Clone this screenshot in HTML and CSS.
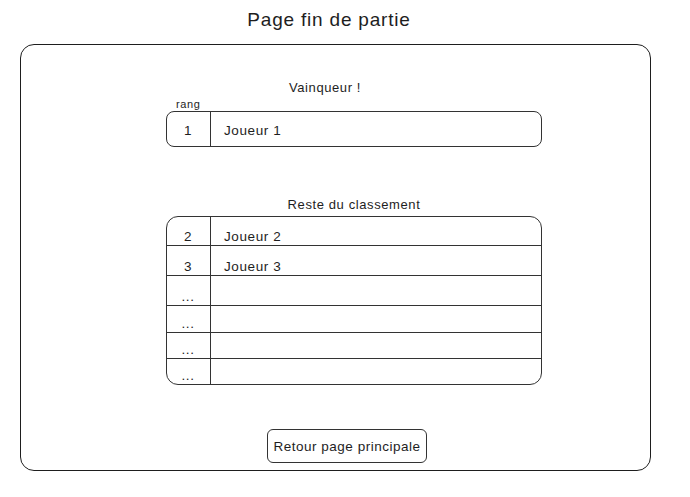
FILE: index.html
```html
<!DOCTYPE html>
<html>
<head>
	<title>Page fin de partie</title>
	<link rel="stylesheet" href="styles.css">
</head>
<body>
	<h1 class="title">Page fin de partie</h1>

	<div class="frame">
		<div class="content">
			<p class="label label-winner">Vainqueur !</p>
			<span class="rank-label">rang</span>
			<div class="board board-winner">
				<div class="row">
					<span class="rank">1</span>
					<span class="name">Joueur 1</span>
				</div>
			</div>

			<p class="label label-rest">Reste du classement</p>
			<div class="board board-rest">
				<div class="row">
					<span class="rank">2</span>
					<span class="name">Joueur 2</span>
				</div>
				<div class="row">
					<span class="rank">3</span>
					<span class="name">Joueur 3</span>
				</div>
				<div class="row">
					<span class="rank">...</span>
					<span class="name"></span>
				</div>
				<div class="row">
					<span class="rank">...</span>
					<span class="name"></span>
				</div>
				<div class="row">
					<span class="rank">...</span>
					<span class="name"></span>
				</div>
				<div class="row">
					<span class="rank">...</span>
					<span class="name"></span>
				</div>
			</div>

			<button class="back">Retour page principale</button>
		</div>
	</div>
</body>
</html>
```

FILE: styles.css
```css
* {
	margin: 0;
	padding: 0;
	box-sizing: border-box;
}

body {
	background-color: #fff;
	color: #1e1e1e;
	font-family: "Liberation Sans", Arial, sans-serif;
	letter-spacing: 0.6px;
}

.title {
	height: 44px;
	line-height: 40px;
	font-size: 19px;
	font-weight: normal;
	text-align: center;
	padding-right: 32px;
	letter-spacing: 0.8px;
}

.frame {
	width: 631px;
	height: 427px;
	margin-left: 20px;
	border: 1.5px solid #1e1e1e;
	border-radius: 14px;
}

.content {
	width: 376px;
	margin-left: 145px;
	padding-top: 34px;
	display: flex;
	flex-direction: column;
}

.label {
	font-size: 13px;
	line-height: 18px;
	text-align: center;
}

.label-winner {
	padding-right: 58px;
}

.label-rest {
	margin-top: 49px;
	margin-bottom: 2px;
}

.rank-label {
	font-size: 11px;
	line-height: 14px;
	padding-left: 10px;
}

.board {
	display: grid;
	border: 1px solid #333;
	font-size: 13.5px;
	line-height: 16px;
}

.board-winner {
	height: 36px;
	border-radius: 8px;
}

.board-rest {
	height: 169px;
	border-radius: 12px;
	grid-template-rows: 29px 30px 30px 27px 26px 1fr;
}

.row {
	display: grid;
	grid-template-columns: 43px 1fr;
}

.rank,
.name {
	display: flex;
	align-items: flex-end;
}

.board-winner .rank,
.board-winner .name {
	align-items: center;
	padding-top: 3px;
}

.board-rest .row {
	border-bottom: 1px solid #333;
}

.board-rest .row:last-child {
	border-bottom: none;
}

.rank {
	justify-content: center;
	padding-right: 1px;
}

.name {
	padding-left: 13px;
	border-left: 1px solid #333;
}

.back {
	align-self: flex-start;
	margin-top: 44px;
	margin-left: 101px;
	width: 160px;
	height: 34px;
	background: #fff;
	color: #1e1e1e;
	border: 1px solid #333;
	border-radius: 6px;
	font-family: "Liberation Sans", Arial, sans-serif;
	font-size: 13.5px;
	letter-spacing: 0.5px;
}
```
